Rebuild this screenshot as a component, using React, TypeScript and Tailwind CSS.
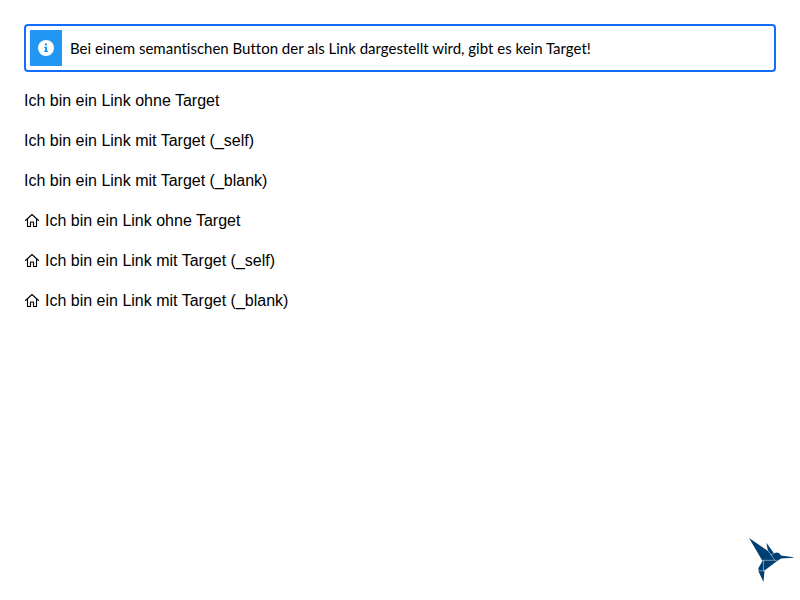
import React from "react";

function HomeIcon() {
  return (
    <svg aria-hidden="true" viewBox="0 0 16 16" className="size-4 shrink-0" fill="none" stroke="currentColor" strokeWidth="1.1" strokeLinejoin="round" strokeLinecap="round">
      <path d="M1.500 7.500 8 1.500 14.500 7.500" />
      <path d="M3.500 6.200v7.300h3v-4.500h3v4.500h3V6.200" />
    </svg>
  );
}

function InfoIcon() {
  return (
    <svg aria-hidden="true" viewBox="0 0 16 16" className="size-4">
      <circle cx="8" cy="8" r="8" fill="#fff" />
      <path fill="#2196f3" d="M6.900 3.500h2.200v2H6.900zM6.200 6.700h2.900v4h.9v1.400H6.100v-1.400H7V8.100h-.8z" />
    </svg>
  );
}

function Hummingbird() {
  return (
    <svg role="img" aria-label="Kolibri" viewBox="0 0 60 60" className="fixed right-0 bottom-[10px] size-[60px]">
      <path fill="#003f72" d="M9 8 28 21 26.300 12.700 34 23.200 36 22.500 39 23 41 25.500 53.500 27.200 53.500 27.800 41 28.500 36.500 31.500 24.500 40.500 23.500 52 18.300 41 18.500 38 22.500 31Z" />
      <path fill="none" stroke="#fff" strokeOpacity="0.75" strokeWidth="0.6" d="M27.500 20 35 30.500M22 30.300H37M30.500 25 36 22M23.500 30V41M18 40.800H25" />
    </svg>
  );
}

const links = [
  { label: "Ich bin ein Link ohne Target" },
  { label: "Ich bin ein Link mit Target (_self)", target: "_self" },
  { label: "Ich bin ein Link mit Target (_blank)", target: "_blank" },
  { label: "Ich bin ein Link ohne Target", icon: true },
  { label: "Ich bin ein Link mit Target (_self)", target: "_self", icon: true },
  { label: "Ich bin ein Link mit Target (_blank)", target: "_blank", icon: true },
];

export default function App() {
  return (
    <main className="p-6 font-['Liberation_Sans',Arial,sans-serif] text-base leading-6 text-black">
      <div role="note" className="flex items-center gap-2 rounded border-2 border-[#126dff] bg-white p-1">
        <span className="flex h-9 w-8 shrink-0 items-center justify-center bg-[#2196f3]">
          <InfoIcon />
        </span>
        <p className="font-['Lato',sans-serif] text-[15px] [font-variant-ligatures:none]">
          Bei einem semantischen Button der als Link dargestellt wird, gibt es kein Target!
        </p>
      </div>
      <ul className="flex flex-col items-start gap-4 pt-[17px]">
        {links.map(({ label, target, icon }, index) => (
          <li key={index}>
            <a href="#link" target={target} className="flex items-center gap-[5px]">
              {icon && <HomeIcon />}
              {label}
            </a>
          </li>
        ))}
      </ul>
      <Hummingbird />
    </main>
  );
}
